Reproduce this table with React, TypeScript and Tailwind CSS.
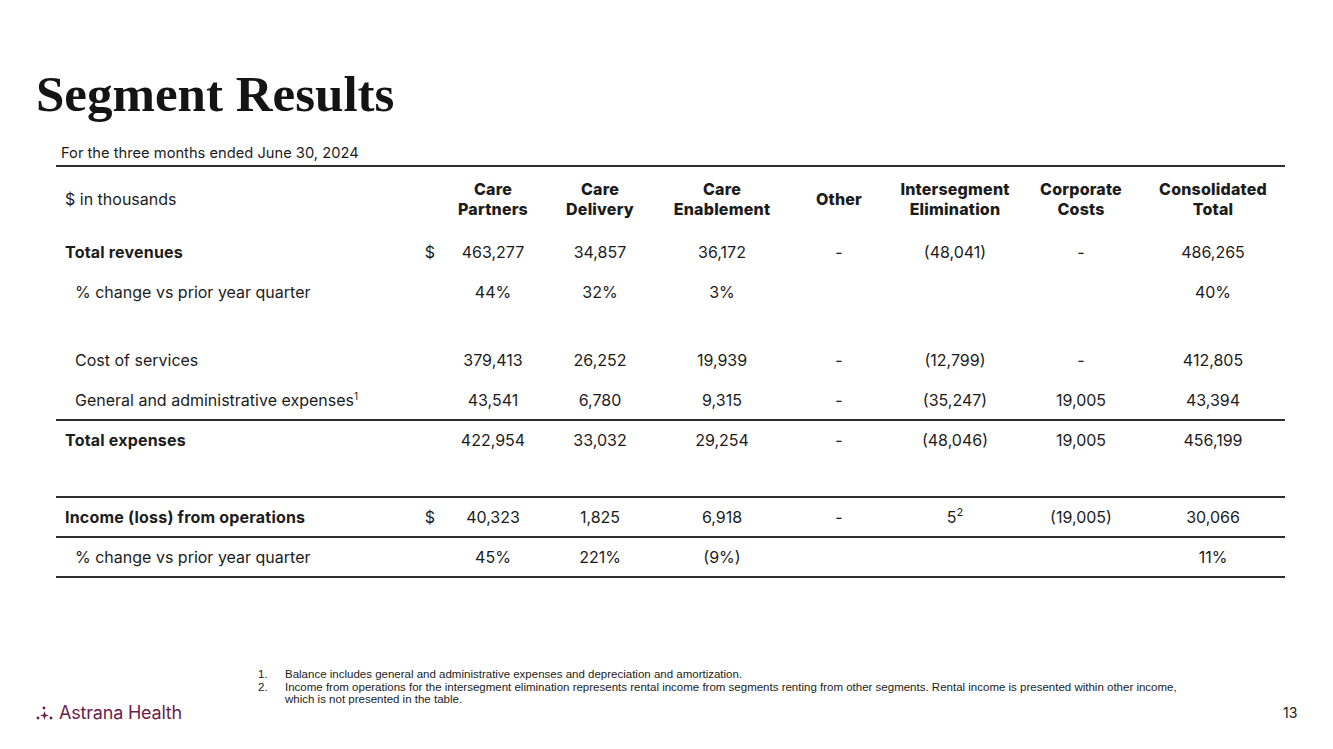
import React from "react";

const body = { fontFamily: "Inter, 'Liberation Sans', Arial, sans-serif" };

type Row = {
  label: React.ReactNode;
  bold?: boolean;
  indent?: boolean;
  dollar?: boolean;
  values: React.ReactNode[];
};

const cols = "grid grid-cols-[359px_30px_96px_118px_126px_108px_124px_128px_136px]";

// rule with no net height, so rows keep a steady 40px pitch
const Line = () => <div className="relative z-10 h-[2px] -my-[1px] bg-[#2e2e2e]" />;

const DataRow = ({ row }: { row: Row }) => (
  <div className={`${cols} h-[40px] items-center text-[16px] text-[#1c1c1c]`}>
    <div className={`${row.indent ? "pl-[19px]" : "pl-[9px]"} ${row.bold ? "font-bold tracking-[0.2px]" : ""}`}>
      {row.label}
    </div>
    <div className="text-center">{row.dollar ? "$" : ""}</div>
    {row.values.map((v, i) => (
      <div key={i} className="text-center">
        {v}
      </div>
    ))}
  </div>
);

const Logo = () => (
  <div className="flex items-center gap-[3px] text-[#6a1d4b]">
    <svg width="20" height="16" viewBox="0 0 20 16" fill="currentColor">
      <circle cx="2" cy="13" r="1.4" />
      <circle cx="8" cy="3" r="1.4" />
      <circle cx="15" cy="13" r="1.4" />
      <path d="M8.5 6 L9.6 9.4 L13 10.5 L9.6 11.6 L8.5 15 L7.4 11.6 L4 10.5 L7.4 9.4 Z" />
    </svg>
    <span className="text-[18px] leading-none tracking-[-0.2px]">Astrana Health</span>
  </div>
);

export default function App() {
  return (
    <div className="w-[1333px] h-[749px] bg-white relative overflow-hidden" style={body}>
      <div className="pt-[69px] pl-[36px]">
        <h1
          className="text-[51px] font-bold leading-none text-[#141414]"
          style={{ fontFamily: "'Liberation Serif', 'DejaVu Serif', serif" }}
        >
          Segment Results
        </h1>
      </div>

      <div className="ml-[56px] mt-[20px] w-[1229px]">
        <div className="pl-[5px] h-[26px] leading-[26px] text-[14.7px] text-[#1c1c1c]">
          For the three months ended June 30, 2024
        </div>
        <Line />

        {/* header */}
        <div className={`${cols} h-[66px] items-center text-[#1c1c1c]`}>
          <div className="pl-[9px] text-[16px]">$ in thousands</div>
          <div />
          {[
            ["Care", "Partners"],
            ["Care", "Delivery"],
            ["Care", "Enablement"],
            ["Other"],
            ["Intersegment", "Elimination"],
            ["Corporate", "Costs"],
            ["Consolidated", "Total"],
          ].map((h, i) => (
            <div key={i} className="text-center font-extrabold text-[16px] leading-[20px] tracking-[0.2px]">
              {h.map((t) => (
                <div key={t}>{t}</div>
              ))}
            </div>
          ))}
        </div>

        <DataRow
          row={{
            label: "Total revenues",
            bold: true,
            dollar: true,
            values: ["463,277", "34,857", "36,172", "-", "(48,041)", "-", "486,265"],
          }}
        />
        <DataRow
          row={{
            label: "% change vs prior year quarter",
            indent: true,
            values: ["44%", "32%", "3%", "", "", "", "40%"],
          }}
        />
        <div className="h-[28px]" />
        <DataRow
          row={{
            label: "Cost of services",
            indent: true,
            values: ["379,413", "26,252", "19,939", "-", "(12,799)", "-", "412,805"],
          }}
        />
        <DataRow
          row={{
            label: (
              <>
                General and administrative expenses
                <sup className="text-[10px] -top-[6px]">1</sup>
              </>
            ),
            indent: true,
            values: ["43,541", "6,780", "9,315", "-", "(35,247)", "19,005", "43,394"],
          }}
        />
        <Line />
        <DataRow
          row={{
            label: "Total expenses",
            bold: true,
            values: ["422,954", "33,032", "29,254", "-", "(48,046)", "19,005", "456,199"],
          }}
        />
        <div className="h-[37px]" />
        <Line />
        <DataRow
          row={{
            label: "Income (loss) from operations",
            bold: true,
            dollar: true,
            values: [
              "40,323",
              "1,825",
              "6,918",
              "-",
              <>
                5<sup className="text-[11px] -top-[7px]">2</sup>
              </>,
              "(19,005)",
              "30,066",
            ],
          }}
        />
        <Line />
        <DataRow
          row={{
            label: "% change vs prior year quarter",
            indent: true,
            values: ["45%", "221%", "(9%)", "", "", "", "11%"],
          }}
        />
        <Line />
      </div>

      {/* footer */}
      <div className="absolute left-0 right-0 top-[668px] flex items-start">
        <div className="pl-[36px] pt-[36px] w-[258px]">
          <Logo />
        </div>
        <div
          className="text-[11.5px] leading-[12.5px] text-[#1c1c1c] whitespace-nowrap"
          style={{ fontFamily: "'Liberation Sans', Arial, sans-serif" }}
        >
          <div className="flex">
            <span className="w-[27px]">1.</span>
            <span>Balance includes general and administrative expenses and depreciation and amortization.</span>
          </div>
          <div className="flex">
            <span className="w-[27px] shrink-0">2.</span>
            <span>
              Income from operations for the intersegment elimination represents rental income from segments renting from other segments. Rental income is presented within other income,
              <br />
              which is not presented in the table.
            </span>
          </div>
        </div>
      </div>
      <div className="absolute left-[1283px] top-[702px] text-[14px] text-[#1c1c1c]">13</div>
    </div>
  );
}
